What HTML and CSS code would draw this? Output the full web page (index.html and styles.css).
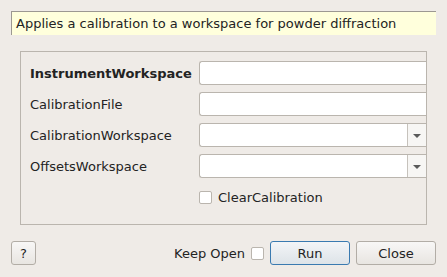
FILE: index.html
```html
<!DOCTYPE html>
<html lang="en">
  <head>
    <meta charset="UTF-8" />
    <title>AlignDetectors</title>
    <link rel="stylesheet" href="styles.css">
  </head>
  <body>
    <div class="dialog">
      <div class="description">Applies a calibration to a workspace for powder diffraction</div>

      <div class="group">
        <div class="prop-row">
          <label class="prop-label required">InstrumentWorkspace</label>
          <div class="field"></div>
        </div>
        <div class="prop-row">
          <label class="prop-label">CalibrationFile</label>
          <div class="field"></div>
        </div>
        <div class="prop-row">
          <label class="prop-label">CalibrationWorkspace</label>
          <div class="field combo">
            <span class="combo-text"></span>
            <span class="combo-arrow"></span>
          </div>
        </div>
        <div class="prop-row">
          <label class="prop-label">OffsetsWorkspace</label>
          <div class="field combo">
            <span class="combo-text"></span>
            <span class="combo-arrow"></span>
          </div>
        </div>
        <div class="prop-row">
          <span class="prop-label"></span>
          <label class="check"><span class="box"></span>ClearCalibration</label>
        </div>
      </div>

      <div class="button-bar">
        <button class="btn help">?</button>
        <div class="spacer"></div>
        <label class="keep-open">Keep Open <span class="box"></span></label>
        <button class="btn run">Run</button>
        <button class="btn">Close</button>
      </div>
    </div>
  </body>
</html>
```

FILE: styles.css
```css
body {
  margin: 0;
  background-color: #efebe7;
  font-family: "DejaVu Sans", sans-serif;
  font-size: 13px;
  color: #232323;
}
.dialog {
  width: 447px;
  height: 277px;
  padding: 11px 11px 0 11px;
  box-sizing: border-box;
}
.description {
  height: 24px;
  line-height: 23px;
  padding-left: 4px;
  background-color: #ffffdc;
  border-top: 1px solid #9c9892;
  border-left: 1px solid #9c9892;
  box-sizing: border-box;
}
.group {
  margin: 16px 9px 0 9px;
  height: 174px;
  border: 1px solid #bab5ae;
  box-sizing: border-box;
  padding: 9px 0 0 9px;
  overflow: hidden;
}
.prop-row {
  display: flex;
  align-items: center;
  height: 24px;
  margin-bottom: 7px;
}
.prop-label {
  width: 169px;
  flex-shrink: 0;
}
.prop-label.required {
  font-weight: bold;
}
.field {
  flex: 1;
  height: 24px;
  box-sizing: border-box;
  background-color: #fff;
  border: 1px solid #bab5ae;
  border-right: none;
  border-radius: 3px 0 0 3px;
}
.combo {
  display: flex;
}
.combo-text {
  flex: 1;
}
.combo-arrow {
  width: 18px;
  border-left: 1px solid #c6c2bc;
  background-color: #f7f6f4;
  position: relative;
}
.combo-arrow::after {
  content: "";
  position: absolute;
  left: 5px;
  top: 10px;
  border-left: 4px solid transparent;
  border-right: 4px solid transparent;
  border-top: 4px solid #5a5a5a;
}
.box {
  display: inline-block;
  width: 13px;
  height: 13px;
  box-sizing: border-box;
  background-color: #fff;
  border: 1px solid #bab5ae;
  border-radius: 2px;
}
.check {
  display: flex;
  align-items: center;
  gap: 6px;
}
.button-bar {
  display: flex;
  align-items: center;
  margin-top: 16px;
}
.spacer {
  flex: 1;
}
.keep-open {
  display: flex;
  align-items: center;
  gap: 6px;
  margin-right: 6px;
}
.btn {
  height: 24px;
  width: 80px;
  font-family: "DejaVu Sans", sans-serif;
  font-size: 13px;
  color: #232323;
  border: 1px solid #b2ada6;
  border-radius: 3px;
  background: linear-gradient(#f8f7f6, #e8e5e1);
  margin-left: 6px;
  padding: 0;
}
.btn.help {
  width: 25px;
  margin-left: 0;
}
.btn.run {
  margin-left: 0;
  border-color: #3a7ab0;
  background: linear-gradient(#f3f5f7, #dde3e8);
}
```
